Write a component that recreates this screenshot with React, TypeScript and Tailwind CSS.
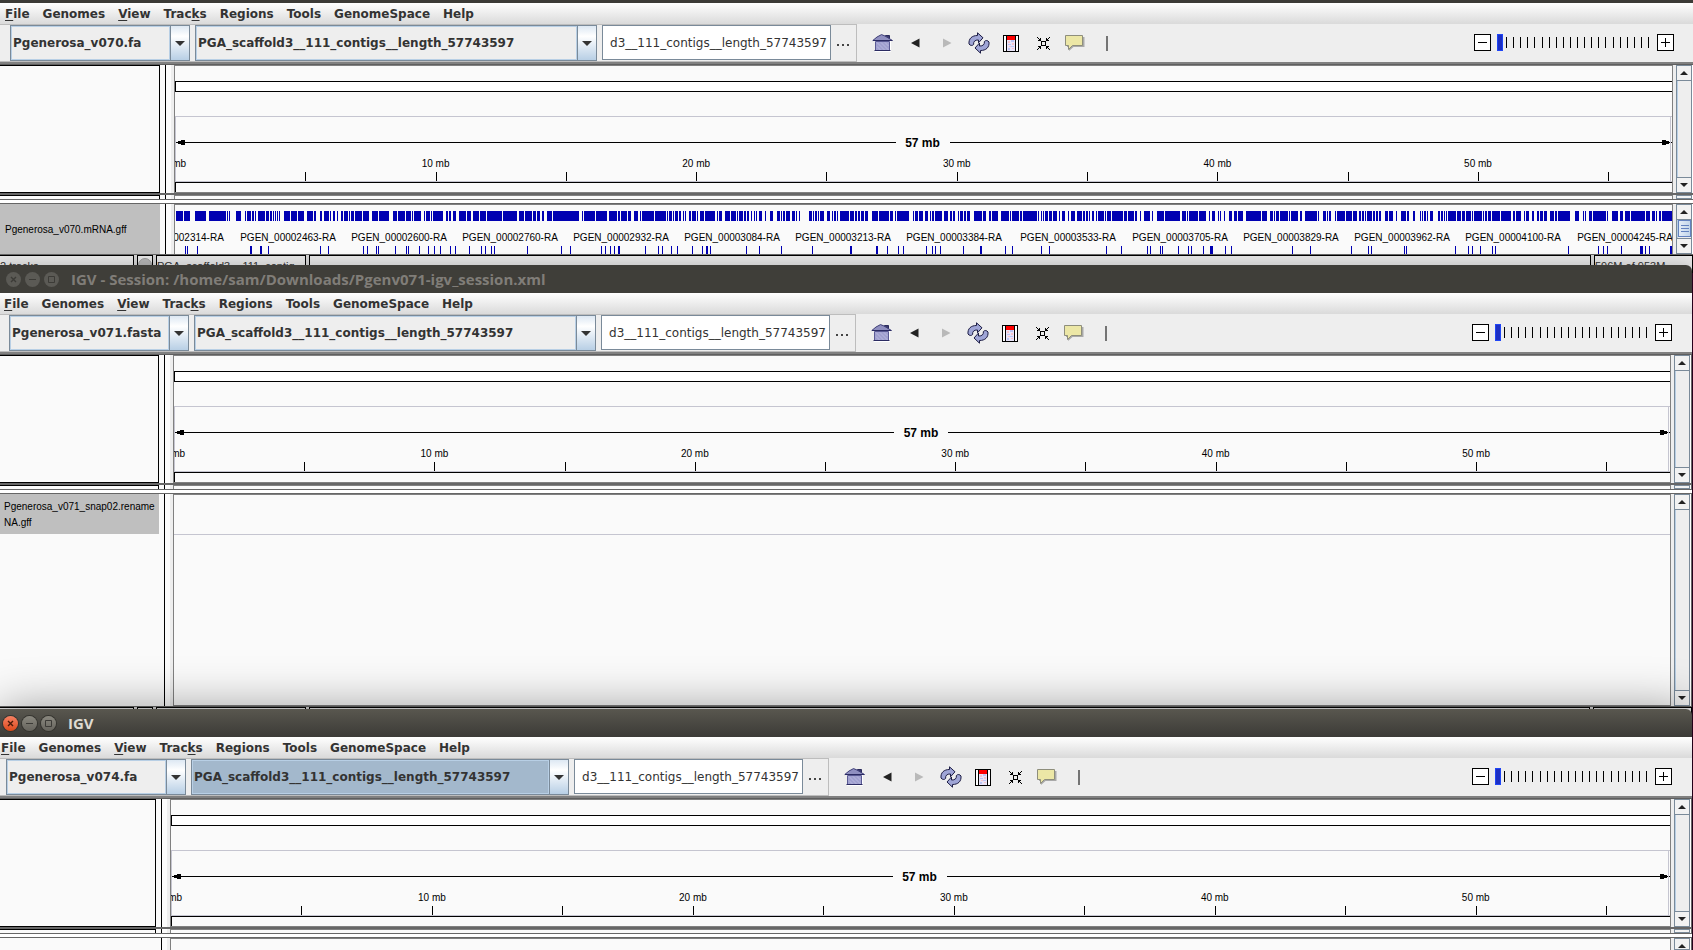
import React from "react";

type Range = [number, number];

const MENUS: { text: string; key?: number }[] = [
  { text: "File", key: 0 },
  { text: "Genomes" },
  { text: "View", key: 0 },
  { text: "Tracks", key: 4 },
  { text: "Regions" },
  { text: "Tools" },
  { text: "GenomeSpace" },
  { text: "Help" },
];

const SCAFFOLD = "PGA_scaffold3__111_contigs__length_57743597";
const TRACK_WIDTH = 1497;
const TICK_STEP = 8.704;

function place(origin: number, scale: number, flat: number[]): Range[] {
  const out: Range[] = [];
  for (let i = 0; i < flat.length; i += 2) {
    const start = Math.round(origin + flat[i] / scale);
    const end = Math.round(origin + flat[i + 1] / scale);
    out.push([start, Math.max(1, end - start)]);
  }
  return out;
}

const EXPANDED: Range[] = [
  ...place(-175, 2.8, [
    493, 512, 515, 532, 547, 577, 585, 633, 635, 638, 641, 644, 661, 675, 686, 689, 692, 703, 706, 712, 714, 717, 722, 742,
    745, 754, 756, 762, 764, 768, 771, 773, 776, 778, 781, 784, 795, 805, 807, 812, 815, 832, 835, 851, 860, 875, 878, 885,
    896, 902, 906, 912, 914, 922, 924, 928, 932, 938, 944, 946, 955, 959, 962, 974, 976, 981, 983, 991, 994, 1013, 1016,
    1033, 1042, 1057, 1061, 1089, 1100, 1111, 1113, 1122, 1124, 1134, 1136, 1150, 1154, 1156, 1160, 1178, 1187, 1191, 1194,
    1203, 1206, 1210, 1213, 1240, 1250, 1253, 1256, 1264, 1269, 1276, 1286, 1304, 1308, 1319, 1323, 1340, 1344, 1361, 1364,
    1406, 1408, 1447, 1453, 1467, 1470, 1489, 1492, 1500, 1503, 1513, 1517, 1522, 1532, 1545, 1548, 1568,
  ]),
  ...place(385, 2.7034, [
    0, 51, 59, 62, 66, 95, 97, 127, 132, 148, 150, 153, 156, 161, 165, 181, 184, 192, 201, 211, 216, 219, 222, 254, 257,
    287, 289, 292, 295, 303, 306, 309, 312, 319, 321, 327, 333, 335, 338, 341, 349, 354, 356, 368, 371, 373, 379, 389, 392,
    419, 424, 427, 430, 438, 446, 459, 462, 475, 478, 482, 485, 494, 497, 504, 506, 512, 515, 519, 524, 527, 530, 533, 538,
    546, 554, 557, 568, 575, 587, 595, 598, 601, 604, 609, 612, 623, 626, 634, 637, 640, 646, 649, 673, 680, 683, 687, 690,
    694, 697, 700, 703, 714, 723, 731, 734, 738, 741, 745, 748, 752, 757, 781, 785, 795, 798, 803, 806, 812, 815, 821, 825,
    832, 844, 860, 863, 889, 892, 900, 906, 909, 912, 943, 953, 955, 960, 968, 971, 980, 987, 995, 999, 1003, 1006, 1010,
    1013, 1034, 1037, 1050, 1053, 1059, 1062, 1067, 1076, 1079, 1082, 1090, 1093, 1097, 1100, 1108, 1119, 1141, 1144, 1152,
    1161, 1165, 1168, 1184, 1192, 1214, 1217, 1219, 1222, 1241, 1244, 1250, 1253, 1290, 1292, 1295, 1300, 1303, 1306, 1309,
    1312, 1320, 1323, 1330, 1334, 1343, 1350, 1353, 1357, 1365, 1373, 1377, 1382, 1391, 1398, 1411, 1414, 1419, 1422, 1427,
    1430, 1433, 1438, 1444, 1449, 1453, 1455, 1470, 1473, 1477, 1480, 1489, 1492, 1521, 1525, 1533, 1536, 1551, 1554, 1560,
  ]),
  ...place(955, 2.785, [
    0, 11, 14, 19, 28, 31, 39, 56, 61, 64, 75, 95, 97, 139, 145, 155, 158, 162, 165, 189, 192, 212, 220, 223, 228, 237,
    245, 248, 251, 253, 263, 265, 277, 285, 290, 299, 302, 315, 323, 366, 369, 382, 390, 399, 402, 405, 407, 415, 418, 441,
    443, 446, 449, 468, 473, 479, 487, 521, 524, 526, 538, 546, 549, 552, 555, 560, 571, 573, 577, 599, 602, 618, 621, 633,
    638, 643, 646, 651, 654, 656, 660, 673, 676, 683, 686, 691, 694, 699, 710, 719, 722, 732, 741, 744, 755, 768, 771, 777,
    789, 795, 808, 811, 814, 817, 820, 823, 827, 831, 836, 844, 859, 862, 865, 871, 874, 878, 880, 884, 886, 908, 911, 922,
    925, 934, 937, 950, 953, 956, 958, 980, 983, 987, 990, 993, 996, 1005, 1008, 1030, 1033, 1061, 1067, 1073, 1076, 1089,
    1097, 1101, 1104, 1111, 1120, 1125, 1134, 1140, 1143, 1149, 1152, 1161, 1170, 1181, 1184, 1190, 1192, 1225, 1240, 1251,
    1262, 1264, 1267, 1270, 1277, 1287, 1290, 1326, 1328, 1331, 1342, 1360, 1366, 1374, 1379, 1393, 1396, 1400, 1402, 1434,
    1437, 1449, 1454, 1463, 1466, 1469, 1472, 1479, 1483, 1510,
  ]),
];

const OVERLAPPING: Range[] = [
  ...place(-175, 2.8, [
    518, 521, 523, 526, 552, 554, 700, 706, 728, 734, 750, 753, 896, 899, 918, 921, 1016, 1019, 1028, 1030, 1053, 1056,
    1058, 1061, 1106, 1108, 1137, 1140, 1142, 1145, 1173, 1176, 1198, 1201, 1215, 1218, 1232, 1235, 1260, 1263, 1274, 1277,
    1313, 1316, 1347, 1350, 1358, 1361, 1374, 1377, 1383, 1386, 1476, 1479,
  ]),
  ...place(385, 2.7034, [
    2, 5, 27, 30, 111, 114, 121, 124, 135, 138, 146, 149, 157, 162, 230, 232, 265, 268, 276, 278, 300, 303, 316, 319, 357,
    360, 384, 387, 396, 399, 405, 408, 503, 506, 538, 541, 597, 600, 681, 684, 784, 789, 854, 860, 884, 887, 914, 916, 927,
    930, 989, 992, 1006, 1008, 1014, 1017, 1027, 1030, 1089, 1092, 1135, 1141, 1203, 1206, 1222, 1225, 1300, 1303, 1322,
    1325, 1476, 1479, 1517, 1519,
  ]),
  ...place(955, 2.785, [
    47, 50, 56, 58, 83, 86, 89, 92, 133, 136, 161, 164, 170, 173, 203, 206, 223, 231, 265, 268, 281, 284, 451, 454, 501,
    504, 616, 618, 663, 666, 671, 674, 763, 766, 769, 771, 905, 908, 941, 944, 952, 955, 975, 978, 1008, 1011, 1017, 1020,
    1220, 1223, 1303, 1306, 1317, 1320, 1328, 1331, 1367, 1370, 1420, 1429, 1434, 1437, 1445, 1448, 1504, 1510,
  ]),
];

const GENE_LABELS: [string, number][] = [
  ["PGEN_00002314-RA", 1],
  ["PGEN_00002463-RA", 113],
  ["PGEN_00002600-RA", 224],
  ["PGEN_00002760-RA", 335],
  ["PGEN_00002932-RA", 446],
  ["PGEN_00003084-RA", 557],
  ["PGEN_00003213-RA", 668],
  ["PGEN_00003384-RA", 779],
  ["PGEN_00003533-RA", 893],
  ["PGEN_00003705-RA", 1005],
  ["PGEN_00003829-RA", 1116],
  ["PGEN_00003962-RA", 1227],
  ["PGEN_00004100-RA", 1338],
  ["PGEN_00004245-RA", 1450],
];

/* ---------- icons ---------- */

function HomeIcon() {
  return (
    <svg width="22" height="18" viewBox="0 0 22 18">
      <path d="M3 7h16v11H3z" fill="#fff" />
      <path d="M13.500 1.500h4v5h-4z" fill="#3b3b6e" stroke="#2a2a5c" />
      <path d="M9.500 .6 13 2l7.500 4.500H.8L5 3z" fill="#8f8fc0" stroke="#3f3f78" />
      <path d="M3.500 7.500h14v9h-14z" fill="#a0a0cf" stroke="#5a5a94" />
      <path d="m5 8.500 7.500 7.500M9 8.500l7.500 7.500M13 8.500l3.500 3.500M5 12.500l3.500 3.500" stroke="#b9b9e0" />
      <path d="M1 6.500h19M2.500 16.500h16" stroke="#2b2b62" />
    </svg>
  );
}

function ArrowIcon({ forward = false }: { forward?: boolean }) {
  return (
    <svg width="9" height="10" viewBox="0 0 9 10">
      {forward ? <path d="M0 .5 8.500 5 0 9.500z" fill="#b9b9b9" /> : <path d="M8.500 .5 0 5l8.500 4.500z" fill="#222" />}
    </svg>
  );
}

function RefreshIcon() {
  return (
    <svg width="22" height="22" viewBox="0 0 22 22" strokeLinejoin="round">
      <path
        d="M1 12C.5 6.500 4 3.500 9.500 3.500V.8l5.500 5-4.500 5V8C7 7.800 5.300 9.500 5.600 12.500c-1.300 1.500-3.400 1.200-4.600-.5z"
        fill="#9fa5d6"
        stroke="#1c1c44"
      />
      <path
        d="M21 10c.5 5.500-3 8.500-8.500 8.500v2.700L7 16l4.500-5v3c3.500.2 5.200-1.500 4.900-4.500 1.300-1.500 3.400-1.200 4.600.5z"
        fill="#9fa5d6"
        stroke="#1c1c44"
      />
    </svg>
  );
}

function RegionIcon() {
  return (
    <svg width="16" height="17" viewBox="0 0 16 17" shapeRendering="crispEdges">
      <rect width="16" height="17" fill="#000" />
      <rect x="1" y="1" width="14" height="15" fill="#fff" />
      <rect x="4" y="1" width="8" height="15" fill="#e8e4f8" />
      <rect x="4" y="1" width="8" height="4" fill="#f00" />
      <path d="M5 6h2v2H5zM9 8h2v2H9zM6 11h2v1H6zM9 13h2v1H9z" fill="#f6c3cc" />
      <path d="M8 5h3v2H8zM5 9h3v1H5zM8 11h3v1H8zM5 13h2v2H5z" fill="#bcc4f4" />
      <path d="M3 1h1v15H3zM12 1h1v15h-1z" fill="#000" />
    </svg>
  );
}

function FitIcon() {
  return (
    <svg width="13" height="13" viewBox="0 0 13 13" fill="none" stroke="#000" shapeRendering="crispEdges">
      <rect x="4.500" y="4.500" width="4" height="4" />
      <path d="M0 .5h1M1 1.500h1M2 2.500h2M3 3.500h1M3.500 1v2M1 3.500h3M12 .5h1M11 1.500h1M9 2.500h2M9.500 1v3M9 3.500h3M0 12.500h1M1 11.500h1M2 10.500h2M3.500 9v3M1 9.500h3M12 12.500h1M11 11.500h1M9 10.500h2M9.500 9v3M9 9.500h3" />
    </svg>
  );
}

function CommentIcon() {
  return (
    <svg width="20" height="16" viewBox="0 0 20 16">
      <path d="M2 2h17.500v10H8.500L4 16v-4H2z" fill="#a9a9a9" />
      <path d="M.5 .5h17v10H7.500L3.500 14.500v-4H.5z" fill="#ece7a6" stroke="#8e8e7c" />
    </svg>
  );
}

function BarIcon() {
  return (
    <svg width="2" height="15" viewBox="0 0 2 15">
      <path d="M0 0h2v15H0z" fill="#747474" />
    </svg>
  );
}

const TOOLS: { name: string; icon: React.ReactNode }[] = [
  { name: "Home", icon: <HomeIcon /> },
  { name: "Back", icon: <ArrowIcon /> },
  { name: "Forward", icon: <ArrowIcon forward /> },
  { name: "Refresh", icon: <RefreshIcon /> },
  { name: "Define region", icon: <RegionIcon /> },
  { name: "Fit to window", icon: <FitIcon /> },
  { name: "Popup text", icon: <CommentIcon /> },
  { name: "Ruler line", icon: <BarIcon /> },
];

/* ---------- window chrome ---------- */

function TitleBar({ title, active = false, className }: { title: string; active?: boolean; className: string }) {
  const round = "flex size-[15px] items-center justify-center rounded-full";
  const tone = active
    ? "bg-linear-to-b from-[#8a887f] to-[#66645d] text-[#3c3b37] ring-1 ring-[#35342f]"
    : "bg-[#5b5a55] text-[#3c3b37]";
  const close = active ? "bg-linear-to-b from-[#f58061] to-[#dd4814] text-[#4b1a08] ring-1 ring-[#35342f]" : tone;
  return (
    <header
      className={`flex h-7 items-center gap-1 rounded-tr-md ${
        active ? "bg-linear-to-b from-[#59574f] to-[#3c3b37]" : "bg-[#3f3e39]"
      } ${className}`}
    >
      <button aria-label="Close" className={`${round} ${close}`}>
        <svg width="7" height="7" viewBox="0 0 7 7" stroke="currentColor" strokeWidth="1.400">
          <path d="m1 1 5 5M6 1 1 6" />
        </svg>
      </button>
      <button aria-label="Minimize" className={`${round} ${tone}`}>
        <svg width="7" height="7" viewBox="0 0 7 7" stroke="currentColor">
          <path d="M0 3.500h7" />
        </svg>
      </button>
      <button aria-label="Maximize" className={`${round} ${tone}`}>
        <svg width="7" height="7" viewBox="0 0 7 7" fill="none" stroke="currentColor">
          <path d="M.5 .5h6v6h-6z" />
        </svg>
      </button>
      <h1
        className={`ml-2 font-['Open_Sans','Noto_Sans',sans-serif] text-[15px] leading-5 font-bold whitespace-nowrap ${
          active ? "text-[#dfdbd2]" : "text-[#807d78]"
        }`}
      >
        {title}
      </h1>
    </header>
  );
}

function MenuBar({ className }: { className: string }) {
  return (
    <nav className={`flex h-[21px] items-center gap-[13px] bg-linear-to-b from-white to-[#dadada] ${className}`}>
      {MENUS.map(({ text, key }) => (
        <button key={text} className="leading-5">
          {key === undefined ? (
            text
          ) : (
            <>
              {text.slice(0, key)}
              <span className="underline underline-offset-2">{text[key]}</span>
              {text.slice(key + 1)}
            </>
          )}
        </button>
      ))}
    </nav>
  );
}

function Combo({ label, value, className, shade }: { label: string; value: string; className: string; shade: string }) {
  return (
    <div className={`flex h-9 shrink-0 border border-[#7a8a99] ${className}`}>
      <select
        aria-label={label}
        defaultValue={value}
        className={`min-w-0 flex-1 appearance-none border border-[#b8cfe5] pl-px leading-5 outline-none ${shade}`}
      >
        <option>{value}</option>
      </select>
      <span className="flex w-[19px] items-center justify-center border-l border-[#7a8a99] bg-linear-to-b from-[#dde8f3] via-white via-30% to-[#b8cfe5]">
        <svg width="10" height="5" viewBox="0 0 10 5">
          <path d="M0 0h10L5 5z" fill="#333" />
        </svg>
      </span>
    </div>
  );
}

function ZoomControl() {
  const ticks = Array.from({ length: 21 }, (_, i) => Math.round(9 + i * 7.1));
  const box = "flex size-[17px] items-center justify-center border border-black bg-white";
  return (
    <div className="flex items-center">
      <button aria-label="Zoom out" className={box}>
        <svg width="9" height="9" shapeRendering="crispEdges">
          <path d="M0 4h9v1H0z" />
        </svg>
      </button>
      <div className="relative mx-[6px] h-[17px] w-[154px]">
        <svg className="block size-full" shapeRendering="crispEdges">
          {ticks.map((x) => (
            <rect key={x} x={x} y="3" width="1" height="11" />
          ))}
        </svg>
        <input
          type="range"
          aria-label="Zoom level"
          min={0}
          max={21}
          defaultValue={0}
          className="absolute inset-0 m-0 size-full appearance-none bg-transparent [&::-webkit-slider-thumb]:h-[17px] [&::-webkit-slider-thumb]:w-[6px] [&::-webkit-slider-thumb]:appearance-none [&::-webkit-slider-thumb]:border [&::-webkit-slider-thumb]:border-[#1f45f5] [&::-webkit-slider-thumb]:bg-[#1c2fc4]"
        />
      </div>
      <button aria-label="Zoom in" className={box}>
        <svg width="9" height="9" shapeRendering="crispEdges">
          <path d="M0 4h9v1H0zM4 0h1v9H4z" />
        </svg>
      </button>
    </div>
  );
}

interface ToolbarProps {
  genome: string;
  groupPad: string;
  chromosomeWidth: string;
  chromosomeShade: string;
  endPad: string;
}

function Toolbar({ genome, groupPad, chromosomeWidth, chromosomeShade, endPad }: ToolbarProps) {
  return (
    <div className={`flex h-[38px] items-center bg-[#eeeeee] ${endPad}`}>
      <div className={`flex h-[38px] items-start gap-[5px] border-y border-r border-[#bdbdbd] ${groupPad}`}>
        <Combo label="Genome" value={genome} className="w-[180px]" shade="bg-[#eeeeee]" />
        <Combo label="Chromosome" value={SCAFFOLD} className={chromosomeWidth} shade={chromosomeShade} />
        <div className="flex shrink-0 items-start">
          <input
            aria-label="Locus"
            defaultValue="d3__111_contigs__length_57743597"
            className="h-[35px] w-[229px] border border-[#7a8a99] bg-white pr-[3px] text-right font-normal outline-none"
          />
          <button className="flex h-9 w-[25px] items-center justify-center pt-1" aria-label="Go">
            <svg width="13" height="2" shapeRendering="crispEdges">
              <path d="M0 0h2v2H0zM5 0h2v2H5zM10 0h2v2h-2z" fill="#444" />
            </svg>
          </button>
        </div>
      </div>
      <div className="ml-[10px] flex">
        {TOOLS.map((tool) => (
          <button key={tool.name} aria-label={tool.name} className="flex h-9 w-8 items-center justify-center">
            {tool.icon}
          </button>
        ))}
      </div>
      <div className="ml-auto pb-[1px]">
        <ZoomControl />
      </div>
    </div>
  );
}

/* ---------- data panels ---------- */

function Splitter() {
  return <div className="h-[2px] bg-[#666666]" />;
}

function ScrollBar({ thumb = false }: { thumb?: boolean }) {
  const button = "flex h-[15px] shrink-0 items-center justify-center bg-[#f2f2f2]";
  return (
    <div className="flex w-4 shrink-0 flex-col overflow-hidden border border-[#7a8a99] bg-[#eeeeee]">
      <button aria-label="Scroll up" className={`${button} border-b border-[#7a8a99]`}>
        <svg width="8" height="4" viewBox="0 0 8 4">
          <path d="M0 4h8L4 0z" fill="#222" />
        </svg>
      </button>
      <div className="min-h-0 flex-1 border-l border-[#b8cfe5]">
        {thumb && (
          <div className="flex h-[17px] flex-col items-center justify-center gap-[2px] border border-[#6382bf] bg-linear-to-r from-[#e4edf7] to-[#c3d6ea]">
            <i className="h-px w-2 bg-[#6382bf]" />
            <i className="h-px w-2 bg-[#6382bf]" />
            <i className="h-px w-2 bg-[#6382bf]" />
          </div>
        )}
      </div>
      <button aria-label="Scroll down" className={`${button} border-t border-[#7a8a99]`}>
        <svg width="8" height="4" viewBox="0 0 8 4">
          <path d="M0 0h8L4 4z" fill="#222" />
        </svg>
      </button>
    </div>
  );
}

interface PaneProps {
  className: string;
  nameWidth: string;
  name?: React.ReactNode;
  nameClass?: string;
  canvasClass?: string;
  edge: string;
  thumb?: boolean;
  children?: React.ReactNode;
}

function Pane({ className, nameWidth, name, nameClass = "", canvasClass = "", edge, thumb, children }: PaneProps) {
  return (
    <div className={`flex bg-white ${className}`}>
      <div className={`shrink-0 overflow-hidden bg-[#fafafa] ${nameWidth} ${nameClass}`}>{name}</div>
      <div className="w-[5px] shrink-0 bg-[#fafafa]" />
      <div className="w-px shrink-0 bg-black" />
      <div className="w-[5px] shrink-0 bg-[#fcfcfc]" />
      <div className="w-[3px] shrink-0 bg-[#eeeeee]" />
      <div className={`min-w-0 flex-1 overflow-hidden border-x border-t border-[#808080] bg-[#fafafa] ${canvasClass}`}>
        {children}
      </div>
      <div className="w-[3px] shrink-0 bg-[#eeeeee]" />
      <ScrollBar thumb={thumb} />
      <div className={`shrink-0 bg-white ${edge}`} />
    </div>
  );
}

function Ruler() {
  return (
    <svg
      className="block h-[126px] w-full font-['Liberation_Sans',Arial,sans-serif] font-normal"
      shapeRendering="crispEdges"
    >
      <rect y="15" width="100%" height="11" fill="#000" />
      <rect x="1" y="16" width="100%" height="9" fill="#fff" />
      <rect y="50" width="100%" height="66" fill="#c5c5d0" />
      <svg y="51" x="1" width="100%" height="64" overflow="visible">
        <rect width="100%" height="64" fill="#fafafa" />
      </svg>
      <rect y="116" width="100%" height="1" fill="#000" />
      <rect y="116" width="1" height="10" fill="#000" />
      <rect x="1" y="76" width="100%" height="1" fill="#000" />
      <path d="M10 74H6v1H3v3h3v1h4z" fill="#000" />
      <svg x="100%" overflow="visible">
        <rect x="-2" y="50" width="1" height="66" fill="#c5c5d0" />
        <path d="M-10 74h4v1h3v3h-3v1h-4z" fill="#000" />
      </svg>
      <svg x="50%" overflow="visible">
        <rect x="-28" y="70" width="54" height="14" fill="#fafafa" />
        <text x="-1" y="81" textAnchor="middle" fontSize="12" fontWeight="bold">
          57 mb
        </text>
      </svg>
      {Array.from({ length: 12 }, (_, i) => (
        <g key={i}>
          {i > 0 && <rect x={`${i * TICK_STEP}%`} y="106" width="1" height="9" fill="#000" />}
          {i % 2 === 0 && (
            <text x={`${i * TICK_STEP}%`} y="101" textAnchor="middle" fontSize="10">
              {i * 5} mb
            </text>
          )}
        </g>
      ))}
    </svg>
  );
}

function GeneTrack() {
  return (
    <svg className="block h-[49px] w-full font-['Liberation_Sans',Arial,sans-serif] font-normal">
      <svg
        width="100%"
        height="49"
        viewBox={`0 0 ${TRACK_WIDTH} 49`}
        preserveAspectRatio="none"
        fill="#0000b2"
        shapeRendering="crispEdges"
      >
        {EXPANDED.map(([x, w]) => (
          <rect key={`e${x}`} x={x} y="6" width={w} height="10" />
        ))}
        {OVERLAPPING.map(([x, w]) => (
          <rect key={`o${x}`} x={x} y="41" width={w} height="8" />
        ))}
      </svg>
      {GENE_LABELS.map(([text, x]) => (
        <text key={text} x={`${(x / TRACK_WIDTH) * 100}%`} y="36" textAnchor="middle" fontSize="10">
          {text}
        </text>
      ))}
    </svg>
  );
}

function StatusBar({ className, fields }: { className: string; fields: [string, string, string] }) {
  const box = "overflow-hidden border-t border-r border-black bg-[#e6e6e6] pt-[2px]";
  return (
    <footer
      className={`flex gap-[3px] overflow-hidden border-t border-[#666666] bg-[#d4d4d4] font-['Liberation_Sans',Arial,sans-serif] text-[11px] leading-4 font-normal whitespace-nowrap text-[#333] ${className}`}
    >
      <div className={`w-[134px] ${box}`}>{fields[0]}</div>
      <div className={`flex w-4 justify-center border-l ${box}`}>
        <i className="size-[14px] rounded-full border border-[#999] bg-[#b5b5b5]" />
      </div>
      <div className={`w-[150px] border-l ${box}`}>{fields[1]}</div>
      <div className={`flex-1 border-l ${box}`} />
      <div className={`w-[99px] border-l ${box}`}>{fields[2]}</div>
    </footer>
  );
}

interface BrowserProps extends ToolbarProps {
  titleBar: React.ReactNode;
  menuPad: string;
  nameWidth: string;
  edge: string;
  children: React.ReactNode;
  className: string;
}

function Browser({ titleBar, menuPad, nameWidth, edge, children, className, ...toolbar }: BrowserProps) {
  return (
    <section className={`relative flex flex-col ${className}`}>
      {titleBar}
      <MenuBar className={menuPad} />
      <Toolbar {...toolbar} />
      <div className="h-[3px] border-b border-[#5f5f5f] bg-[#808080]" />
      <Pane
        className="h-[128px] shrink-0"
        nameWidth={nameWidth}
        nameClass="border border-l-0 border-black"
        canvasClass="border-b"
        edge={edge}
      >
        <Ruler />
      </Pane>
      <Splitter />
      <Pane
        className="h-1 shrink-0 overflow-hidden"
        nameWidth={nameWidth}
        nameClass="border border-l-0 border-b-0 border-black"
        edge={edge}
      />
      <div className="h-[5px] shrink-0 border-y border-[#666666] bg-white" />
      {children}
    </section>
  );
}

export default function App() {
  const trackName =
    "bg-[#bfbfbf] font-['Liberation_Sans',Arial,sans-serif] text-[10px] leading-4 font-normal text-black whitespace-nowrap";
  return (
    <main className="flex h-screen flex-col overflow-hidden bg-[#2c001e] font-['DejaVu_Sans',sans-serif] text-[12px] font-bold text-[#333333]">
      <Browser
        className="shrink-0"
        titleBar={<div className="h-[3px] bg-[#3c3b37]" />}
        menuPad="pl-[5px]"
        genome="Pgenerosa_v070.fa"
        groupPad="pl-[10px]"
        chromosomeWidth="w-[402px]"
        chromosomeShade="bg-[#eeeeee]"
        endPad="pr-[19px]"
        nameWidth="w-[160px]"
        edge="w-px"
      >
        <Pane
          className="h-[50px] shrink-0"
          nameWidth="w-[160px]"
          nameClass="flex"
          name={<div className={`flex-1 pt-[18px] pl-[5px] ${trackName}`}>Pgenerosa_v070.mRNA.gff</div>}
          edge="w-px"
          thumb
        >
          <GeneTrack />
        </Pane>
        <StatusBar className="h-[19px]" fields={["2 tracks", "PGA_scaffold3__111_contig...", "596M of 953M"]} />
      </Browser>

      <Browser
        className="mr-px -mt-2 shrink-0 rounded-tr-md shadow-[0_0_16px_rgba(0,0,0,0.2)]"
        titleBar={<TitleBar title="IGV - Session: /home/sam/Downloads/Pgenv071-igv_session.xml" className="pl-[6px]" />}
        menuPad="pl-[4px]"
        genome="Pgenerosa_v071.fasta"
        groupPad="pl-[9px]"
        chromosomeWidth="w-[402px]"
        chromosomeShade="bg-[#eeeeee]"
        endPad="pr-[20px]"
        nameWidth="w-[159px]"
        edge="w-[2px] border-r border-[#666666]"
      >
        <Pane
          className="h-[212px] shrink-0"
          nameWidth="w-[159px]"
          name={
            <div className={`h-10 pt-[5px] pl-1 ${trackName}`}>
              Pgenerosa_v071_snap02.rename
              <br />
              NA.gff
            </div>
          }
          canvasClass="border-b"
          edge="w-[2px] border-r border-[#666666]"
        >
          <div className="h-10 border-b border-[#c5c5d0]" />
        </Pane>
        <StatusBar className="h-[11px]" fields={["", "", ""]} />
      </Browser>

      <Browser
        className="mr-px -mt-2 min-h-0 flex-1 rounded-tr-md shadow-[0_0_48px_rgba(0,0,0,0.4)]"
        titleBar={<TitleBar title="IGV" active className="pl-[3px]" />}
        menuPad="pl-[1px]"
        genome="Pgenerosa_v074.fa"
        groupPad="pl-[6px]"
        chromosomeWidth="w-[378px]"
        chromosomeShade="bg-[#a3b8cc]"
        endPad="pr-[20px]"
        nameWidth="w-[156px]"
        edge="w-[2px] border-r border-[#666666]"
      >
        <Pane
          className="min-h-0 flex-1 overflow-hidden"
          nameWidth="w-[156px]"
          edge="w-[2px] border-r border-[#666666]"
        />
      </Browser>
    </main>
  );
}
